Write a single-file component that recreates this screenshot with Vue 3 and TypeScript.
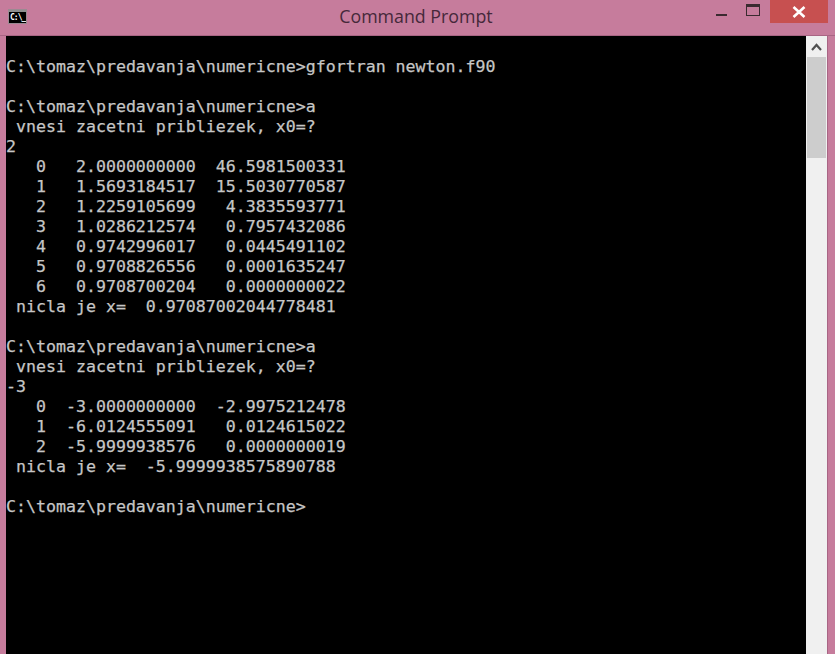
<script setup lang="ts">
const lines: string[] = [
  '',
  'C:\\tomaz\\predavanja\\numericne>gfortran newton.f90',
  '',
  'C:\\tomaz\\predavanja\\numericne>a',
  ' vnesi zacetni pribliezek, x0=?',
  '2',
  '   0   2.0000000000  46.5981500331',
  '   1   1.5693184517  15.5030770587',
  '   2   1.2259105699   4.3835593771',
  '   3   1.0286212574   0.7957432086',
  '   4   0.9742996017   0.0445491102',
  '   5   0.9708826556   0.0001635247',
  '   6   0.9708700204   0.0000000022',
  ' nicla je x=  0.97087002044778481',
  '',
  'C:\\tomaz\\predavanja\\numericne>a',
  ' vnesi zacetni pribliezek, x0=?',
  '-3',
  '   0  -3.0000000000  -2.9975212478',
  '   1  -6.0124555091   0.0124615022',
  '   2  -5.9999938576   0.0000000019',
  ' nicla je x=  -5.9999938575890788',
  '',
  'C:\\tomaz\\predavanja\\numericne>',
]
</script>

<template>
  <div class="window">
    <header class="titlebar">
      <div class="app-icon"><span class="app-icon-text">C:\_</span></div>
      <div class="title">Command Prompt</div>
      <div class="controls">
        <div class="minimize"></div>
        <div class="maximize"></div>
        <div class="close">
          <svg width="14" height="12" viewBox="0 0 14 12">
            <path d="M1.5 1 L12.5 11 M12.5 1 L1.5 11" stroke="#fff" stroke-width="2.6" fill="none" />
          </svg>
        </div>
      </div>
    </header>
    <main class="body">
      <pre class="console"><div v-for="(line, i) in lines" :key="i" class="line">{{ line }}</div></pre>
      <aside class="scrollbar">
        <div class="arrow">
          <svg width="11" height="8" viewBox="0 0 11 8">
            <path d="M1 7 L5.5 2 L10 7" stroke="#505050" stroke-width="2.2" fill="none" />
          </svg>
        </div>
        <div class="thumb"></div>
      </aside>
    </main>
  </div>
</template>

<style>
html, body { margin: 0; background: #c67c9c; }
</style>

<style scoped>
.window {
  width: 835px;
  height: 654px;
  background: #c67c9c;
  display: flex;
  flex-direction: column;
  overflow: hidden;
}
.titlebar {
  height: 35px;
  flex: none;
  display: flex;
  position: relative;
  border-bottom: 1px solid #a86584;
  box-sizing: content-box;
}
.app-icon {
  margin: 10px 0 0 9px;
  width: 17px;
  height: 11px;
  background: #000;
  border-top: 2px solid #8f8f8f;
  box-shadow: 0 0 0 1px #9a8a92;
  overflow: hidden;
}
.app-icon-text {
  display: block;
  color: #fff;
  font: bold 8px/11px "DejaVu Sans Mono", monospace;
  letter-spacing: -1px;
  white-space: pre;
  padding-left: 1px;
}
.title {
  position: absolute;
  left: 0;
  right: 3px;
  top: 4px;
  text-align: center;
  font: 17.8px/24px "Open Sans", sans-serif;
  color: #45283a;
}
.controls {
  position: absolute;
  top: 0;
  right: 7px;
  display: flex;
  align-items: flex-start;
}
.minimize {
  width: 11px;
  height: 2px;
  background: #3a2a30;
  margin: 14px 19px 0 0;
}
.maximize {
  width: 12px;
  height: 8px;
  border: 1px solid #3a2a30;
  border-top-width: 3px;
  margin: 4px 10px 0 0;
}
.close {
  width: 58px;
  height: 23px;
  background: #c75050;
  display: flex;
  align-items: center;
  justify-content: center;
}
.body {
  flex: 1;
  min-height: 0;
  display: flex;
  margin: 0 7px 0 6px;
  border-right: 1px solid #a86584;
}
.console {
  flex: 1;
  margin: 0;
  padding-top: 1px;
  background: #000;
  color: #c6c6c6;
  font: 16.6px/20px "DejaVu Sans Mono", monospace;
  -webkit-text-stroke: 0.25px #c6c6c6;
  overflow: hidden;
}
.line { height: 20px; white-space: pre; }
.scrollbar {
  width: 21px;
  flex: none;
  background: #f0f0f0;
  display: flex;
  flex-direction: column;
  padding: 0 1px;
  box-sizing: border-box;
}
.arrow {
  height: 21px;
  display: flex;
  align-items: center;
  justify-content: center;
}
.thumb {
  height: 101px;
  background: #cdcdcd;
}
</style>
